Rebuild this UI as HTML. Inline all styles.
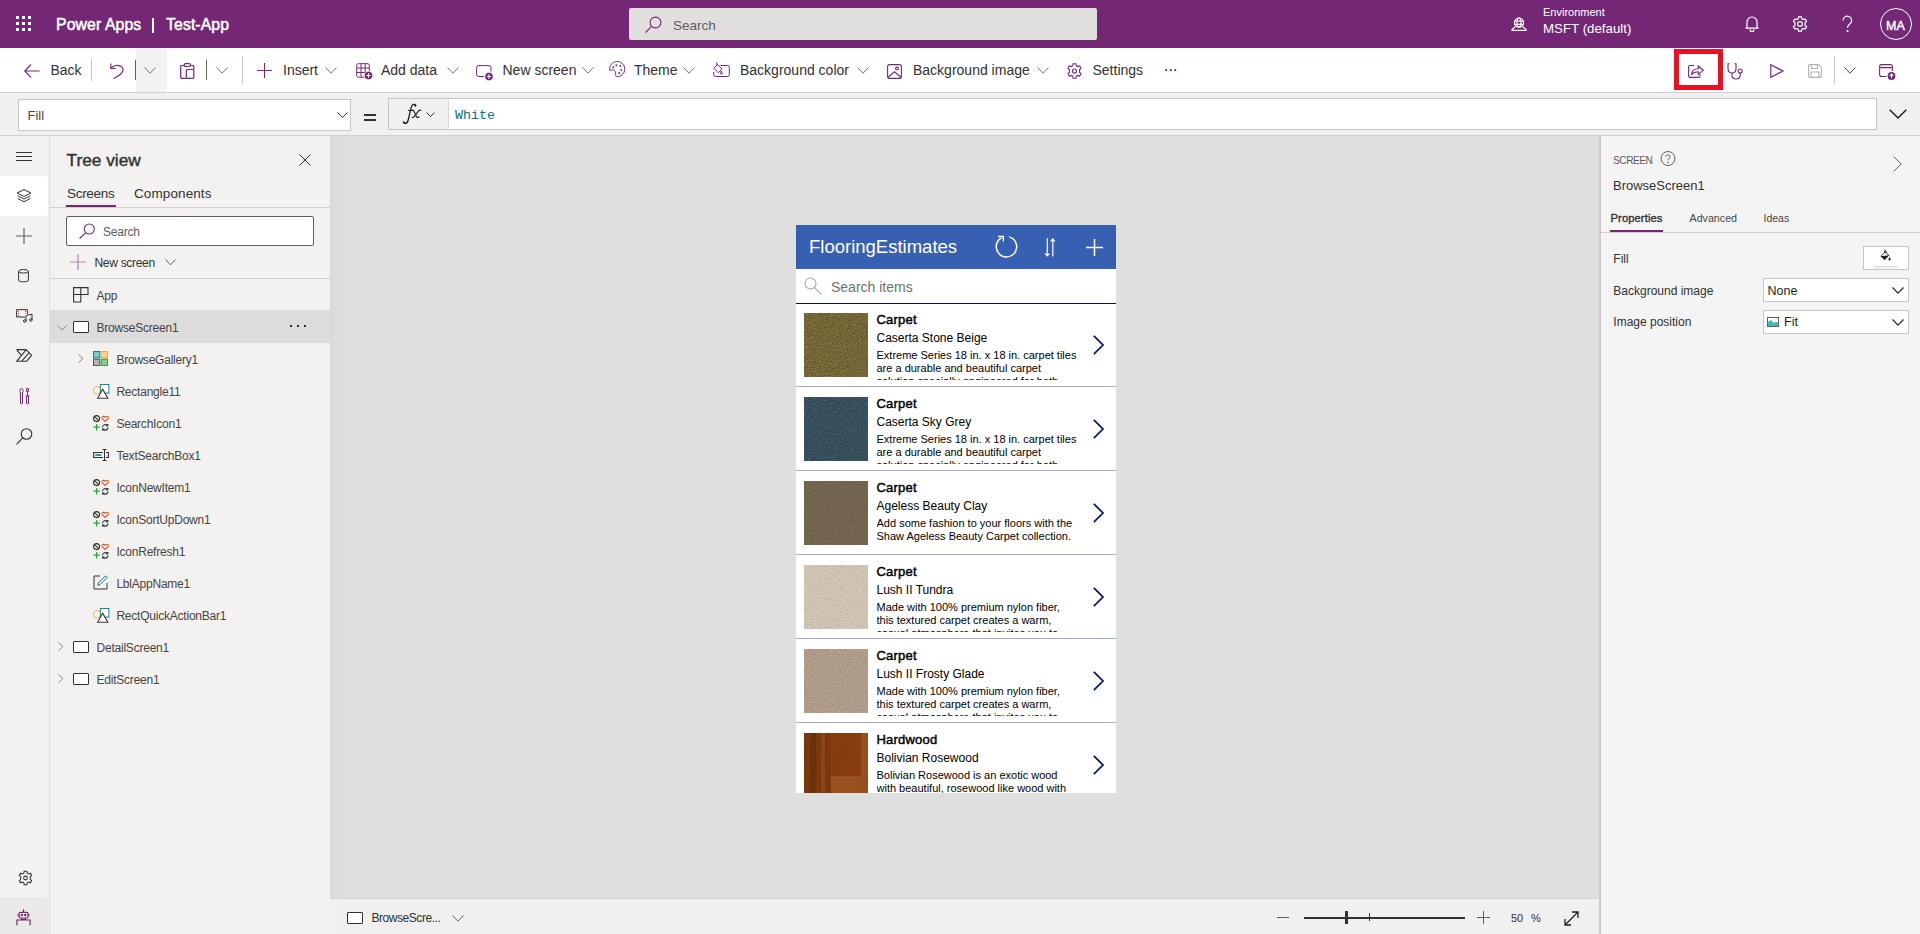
<!DOCTYPE html>
<html><head><meta charset="utf-8">
<style>
*{box-sizing:border-box;margin:0;padding:0}
html,body{width:1920px;height:934px;overflow:hidden;background:#fff;font-family:"Liberation Sans",sans-serif;color:#323130}
.a{position:absolute}
.t{position:absolute;white-space:nowrap;line-height:1}
svg{position:absolute;overflow:visible}
.t0{background:#6e6030;overflow:hidden}
.t1{background:#3b525b}
.t2{background:#6f6350}
.t3{background:#d4c9b8}
.t4{background:#b39f8b}
.t5{background:linear-gradient(90deg,#6b3210 0%,#8a4a1e 12%,#a45a26 25%,#7a3c14 40%,#9c5422 55%,#b0662e 70%,#8c4a1c 85%,#a85e2a 100%)}
</style></head><body>

<!-- ============ TOP BAR ============ -->
<div class="a" style="left:0;top:0;width:1920px;height:48px;background:#742774"></div>
<svg style="left:16px;top:16px" width="16" height="16" viewBox="0 0 16 16" fill="#fff">
<rect x="0" y="0" width="3" height="3"/><rect x="6" y="0" width="3" height="3"/><rect x="12" y="0" width="3" height="3"/>
<rect x="0" y="6" width="3" height="3"/><rect x="6" y="6" width="3" height="3"/><rect x="12" y="6" width="3" height="3"/>
<rect x="0" y="12" width="3" height="3"/><rect x="6" y="12" width="3" height="3"/><rect x="12" y="12" width="3" height="3"/>
</svg>
<div class="t" style="left:56px;top:16.8px;font-size:15.8px;color:#fff;letter-spacing:0.1px;-webkit-text-stroke:0.5px #fff">Power Apps</div>
<div class="a" style="left:152px;top:18px;width:2px;height:15px;background:#fff"></div>
<div class="t" style="left:166px;top:16.8px;font-size:15.8px;color:#fff;letter-spacing:0.1px;-webkit-text-stroke:0.5px #fff">Test-App</div>

<div class="a" style="left:629px;top:8px;width:468px;height:32px;background:#e1dfdd;border-radius:2px"></div>
<svg style="left:645px;top:16px" width="17" height="17" viewBox="0 0 17 17" fill="none" stroke="#742774" stroke-width="1.1">
<circle cx="10.5" cy="6.5" r="5.4"/><line x1="6.6" y1="10.4" x2="0.5" y2="16.5"/>
</svg>
<div class="t" style="left:673px;top:18.6px;font-size:13.5px;color:#605e5c">Search</div>

<!-- environment -->
<svg style="left:1511px;top:17px" width="16" height="14" viewBox="0 0 16 14" fill="none" stroke="#fff" stroke-width="1.2">
<circle cx="8" cy="5.6" r="4.6"/><ellipse cx="8" cy="5.6" rx="2" ry="4.6"/><line x1="3.4" y1="4" x2="12.6" y2="4"/><line x1="3.4" y1="7.3" x2="12.6" y2="7.3"/>
<path d="M4.5 9.5 L1 12.5 L1 13.4 L15 13.4 L15 12.5 L11.5 9.5"/>
</svg>
<div class="t" style="left:1543px;top:7.3px;font-size:11px;color:#fff">Environment</div>
<div class="t" style="left:1543px;top:21.5px;font-size:13.3px;color:#fff">MSFT (default)</div>

<!-- bell -->
<svg style="left:1745px;top:16px" width="14" height="16" viewBox="0 0 14 16" fill="none" stroke="#fff" stroke-width="1.2">
<path d="M2 12 L2 6 A5 5 0 0 1 12 6 L12 12 Z M0.5 12.2 L13.5 12.2"/><path d="M5 13.5 A2 2 0 0 0 9 13.5"/>
</svg>
<!-- gear -->
<svg style="left:1792px;top:16px" width="16" height="16" viewBox="0 0 16 16" fill="none" stroke="#fff" stroke-width="1.2">
<path d="M6.6 0.8 L9.4 0.8 L9.8 2.8 L11.3 3.6 L13.2 2.9 L14.6 5.3 L13.1 6.6 L13.1 9.4 L14.6 10.7 L13.2 13.1 L11.3 12.4 L9.8 13.2 L9.4 15.2 L6.6 15.2 L6.2 13.2 L4.7 12.4 L2.8 13.1 L1.4 10.7 L2.9 9.4 L2.9 6.6 L1.4 5.3 L2.8 2.9 L4.7 3.6 L6.2 2.8 Z"/>
<circle cx="8" cy="8" r="2.4"/>
</svg>
<!-- help -->
<svg style="left:1842px;top:16px" width="11" height="16" viewBox="0 0 11 16" fill="none" stroke="#fff" stroke-width="1.2">
<path d="M1 4.5 A4.3 4.3 0 1 1 7.5 8.2 C6 9.2 5.5 10 5.5 12"/><circle cx="5.5" cy="15" r="0.5" fill="#fff"/>
</svg>
<div class="a" style="left:1880px;top:8px;width:32px;height:32px;border:1px solid #fff;border-radius:50%"></div>
<div class="t" style="left:1886px;top:20.3px;font-size:12.5px;color:#fff;-webkit-text-stroke:0.4px #fff;letter-spacing:0.2px">MA</div>

<!-- ============ TOOLBAR ============ -->
<svg style="left:24px;top:64px" width="16" height="14" viewBox="0 0 16 14" fill="none" stroke="#742774" stroke-width="1.1">
<path d="M7 0.5 L0.8 7 L7 13.5 M0.8 7 L15.6 7"/>
</svg>
<div class="t" style="left:50.5px;top:63.1px;font-size:14px">Back</div>
<div class="a" style="left:91px;top:59px;width:1px;height:22px;background:#c8c6c4"></div>
<svg style="left:110px;top:63px" width="14" height="16" viewBox="0 0 14 16" fill="none" stroke="#742774" stroke-width="1.1">
<path d="M0.8 0.5 L0.8 5.5 L5.6 5.5 M0.8 5.5 C3 2.2 9 1.2 12 4.2 C14.5 7 12.5 11.5 3.5 15.5"/>
</svg>
<div class="a" style="left:135px;top:60px;width:1px;height:20px;background:#605e5c"></div>
<div class="a" style="left:136px;top:48px;width:31px;height:44px;background:#f3f2f1"></div>
<svg style="left:144px;top:67px" width="12" height="7" viewBox="0 0 12 7" fill="none" stroke="#797775" stroke-width="1">
<path d="M0.5 0.5 L6 6.2 L11.5 0.5"/>
</svg>
<svg style="left:180px;top:63px" width="15" height="16" viewBox="0 0 15 16" fill="none" stroke="#742774" stroke-width="1.2">
<path d="M4 2.5 L1.5 2.5 Q0.7 2.5 0.7 3.3 L0.7 14.5 Q0.7 15.3 1.5 15.3 L6 15.3"/>
<path d="M10.5 2.5 L13 2.5 Q13.8 2.5 13.8 3.3 L13.8 6.5"/>
<rect x="4.3" y="0.7" width="6" height="2.8" rx="1"/>
<rect x="6.3" y="6.5" width="7.5" height="8.8" rx="1"/>
</svg>
<div class="a" style="left:206px;top:60px;width:1px;height:20px;background:#605e5c"></div>
<svg style="left:215.5px;top:67px" width="12" height="7" viewBox="0 0 12 7" fill="none" stroke="#797775" stroke-width="1">
<path d="M0.5 0.5 L6 6.2 L11.5 0.5"/>
</svg>
<div class="a" style="left:242px;top:56px;width:1px;height:28px;background:#c8c6c4"></div>
<svg style="left:257px;top:63px" width="15" height="15" viewBox="0 0 15 15" fill="none" stroke="#742774" stroke-width="1.1">
<path d="M7.5 0 L7.5 15 M0 7.5 L15 7.5"/>
</svg>
<div class="t" style="left:283px;top:63.1px;font-size:14px">Insert</div>
<svg style="left:325px;top:67px" width="12" height="7" viewBox="0 0 12 7" fill="none" stroke="#797775" stroke-width="1"><path d="M0.5 0.5 L6 6.2 L11.5 0.5"/></svg>
<svg style="left:355.5px;top:63px" width="17" height="17" viewBox="0 0 17 17" fill="none" stroke="#742774" stroke-width="1">
<path d="M9 14.2 L2.5 14.2 Q0.7 14.2 0.7 12.4 L0.7 2.5 Q0.7 0.7 2.5 0.7 L11.5 0.7 Q13.3 0.7 13.3 2.5 L13.3 9 M0.7 5 L13.3 5 M0.7 9.5 L9 9.5 M5 0.7 L5 14.2 M9.2 0.7 L9.2 10"/>
<circle cx="12.5" cy="12.5" r="4.3" fill="#742774" stroke="#fff" stroke-width="0.8"/>
<path d="M12.5 10.3 L12.5 14.7 M10.3 12.5 L14.7 12.5" stroke="#fff" stroke-width="1.1"/>
</svg>
<div class="t" style="left:381px;top:63.1px;font-size:14px">Add data</div>
<svg style="left:447px;top:67px" width="12" height="7" viewBox="0 0 12 7" fill="none" stroke="#797775" stroke-width="1"><path d="M0.5 0.5 L6 6.2 L11.5 0.5"/></svg>

<svg style="left:475.5px;top:65px" width="18" height="16" viewBox="0 0 18 16" fill="none" stroke="#742774" stroke-width="1">
<path d="M8 11.5 L2.5 11.5 Q0.6 11.5 0.6 9.6 L0.6 2.5 Q0.6 0.6 2.5 0.6 L13 0.6 Q15 0.6 15 2.5 L15 6.5"/>
<circle cx="13" cy="11.5" r="4.3" fill="#742774" stroke="#fff" stroke-width="0.8"/>
<path d="M13 9.3 L13 13.7 M10.8 11.5 L15.2 11.5" stroke="#fff" stroke-width="1.1"/>
</svg>
<div class="t" style="left:502.5px;top:63.1px;font-size:14px">New screen</div>
<svg style="left:582px;top:67px" width="12" height="7" viewBox="0 0 12 7" fill="none" stroke="#797775" stroke-width="1"><path d="M0.5 0.5 L6 6.2 L11.5 0.5"/></svg>

<svg style="left:609px;top:61px" width="17" height="17" viewBox="0 0 17 17" fill="none" stroke="#742774" stroke-width="0.95">
<path d="M0.7 9.3 A7.6 7.6 0 1 1 7.4 15.6 C6.6 15.4 6.6 13.5 6.6 12.2 C6.6 10 5.3 8.7 3.7 8.7 C2.4 8.7 1.8 9.7 0.7 9.3 Z"/>
<circle cx="4.3" cy="6.2" r="0.95" fill="#742774" stroke="none"/><circle cx="7.3" cy="4.2" r="0.95" fill="#742774" stroke="none"/>
<circle cx="11.3" cy="5" r="0.95" fill="#742774" stroke="none"/><circle cx="12.2" cy="9" r="0.95" fill="#742774" stroke="none"/>
<circle cx="10.2" cy="12" r="0.95" fill="#742774" stroke="none"/>
</svg>
<div class="t" style="left:634px;top:63.1px;font-size:14px">Theme</div>
<svg style="left:683px;top:67px" width="12" height="7" viewBox="0 0 12 7" fill="none" stroke="#797775" stroke-width="1"><path d="M0.5 0.5 L6 6.2 L11.5 0.5"/></svg>

<svg style="left:712.5px;top:62px" width="17" height="15" viewBox="0 0 17 15" fill="none" stroke="#742774" stroke-width="1">
<path d="M7.5 3.5 L14.5 3.5 Q16.3 3.5 16.3 5.3 L16.3 12.7 Q16.3 14.5 14.5 14.5 L2.5 14.5 Q0.7 14.5 0.7 12.7 L0.7 10"/>
<path d="M3.8 0.3 L3.8 3.5 M0.8 6.3 L4.6 2.5 L9 6.9 L5.2 10.7 Z M8.3 9 Q10 11 9.2 11.9 Q8.3 12.5 7.6 11.8 Q7.2 10.8 8.3 9 Z"/>
</svg>
<div class="t" style="left:740px;top:63.1px;font-size:14px">Background color</div>
<svg style="left:857px;top:67px" width="12" height="7" viewBox="0 0 12 7" fill="none" stroke="#797775" stroke-width="1"><path d="M0.5 0.5 L6 6.2 L11.5 0.5"/></svg>

<svg style="left:887px;top:64px" width="15" height="15" viewBox="0 0 15 15" fill="none" stroke="#742774" stroke-width="1.1">
<rect x="0.6" y="0.6" width="13.8" height="13.8" rx="2"/>
<path d="M0.8 13.5 L7.5 7.8 L14.2 13.5"/><circle cx="10" cy="4.5" r="1.4"/>
</svg>
<div class="t" style="left:913px;top:63.1px;font-size:14px">Background image</div>
<svg style="left:1037px;top:67px" width="12" height="7" viewBox="0 0 12 7" fill="none" stroke="#797775" stroke-width="1"><path d="M0.5 0.5 L6 6.2 L11.5 0.5"/></svg>

<svg style="left:1065.5px;top:63px" width="17" height="16" viewBox="0 0 16 16" fill="none" stroke="#742774" stroke-width="1.1">
<path d="M6.6 0.8 L9.4 0.8 L9.8 2.8 L11.3 3.6 L13.2 2.9 L14.6 5.3 L13.1 6.6 L13.1 9.4 L14.6 10.7 L13.2 13.1 L11.3 12.4 L9.8 13.2 L9.4 15.2 L6.6 15.2 L6.2 13.2 L4.7 12.4 L2.8 13.1 L1.4 10.7 L2.9 9.4 L2.9 6.6 L1.4 5.3 L2.8 2.9 L4.7 3.6 L6.2 2.8 Z"/><circle cx="8" cy="8" r="2"/>
</svg>
<div class="t" style="left:1092.5px;top:63.1px;font-size:14px">Settings</div>
<svg style="left:1165px;top:69px" width="12" height="3" viewBox="0 0 12 3" fill="#742774">
<circle cx="1.2" cy="1.2" r="1.1"/><circle cx="5.7" cy="1.2" r="1.1"/><circle cx="10.2" cy="1.2" r="1.1"/>
</svg>

<!-- right toolbar -->
<div class="a" style="left:1674px;top:49px;width:49px;height:41px;border:5px solid #e81123"></div>
<svg style="left:1688px;top:64px" width="16" height="14" viewBox="0 0 16 14" fill="none" stroke="#742774" stroke-width="1.1">
<path d="M6 1.5 L2 1.5 Q0.6 1.5 0.6 3 L0.6 12 Q0.6 13.4 2 13.4 L10.5 13.4 Q12 13.4 12 12 L12 10.5"/>
<path d="M3.5 10.5 C4 6.5 7 4.8 10.3 4.8 L10.3 2 L15.3 6.3 L10.3 10.5 L10.3 7.8 C7.5 7.8 5.3 8.5 3.5 10.5 Z"/>
</svg>
<svg style="left:1727px;top:63px" width="17" height="17" viewBox="0 0 17 17" fill="none" stroke="#742774" stroke-width="1.1">
<path d="M2.5 0.8 L1 0.8 L1 5.5 C1 8.5 3 10 5 10 C7 10 9 8.5 9 5.5 L9 0.8 L7.5 0.8"/>
<path d="M5 10 L5 12 C5 14.5 6.5 16 9 16 C11.5 16 13.2 14.5 13.2 12 L13.2 10"/>
<circle cx="13.2" cy="8" r="2"/>
</svg>
<svg style="left:1770px;top:64px" width="14" height="14" viewBox="0 0 14 14" fill="none" stroke="#742774" stroke-width="1.2">
<path d="M0.8 0.8 L13 7 L0.8 13.2 Z"/>
</svg>
<svg style="left:1808px;top:64px" width="14" height="14" viewBox="0 0 14 14" fill="none" stroke="#b3b0ad" stroke-width="1.1">
<path d="M1.8 0.6 L10.5 0.6 L13.4 3.5 L13.4 12 Q13.4 13.4 12 13.4 L2 13.4 Q0.6 13.4 0.6 12 L0.6 2 Q0.6 0.6 1.8 0.6 Z M3.5 0.6 L3.5 4.5 L9.5 4.5 L9.5 0.6 M3 13.4 L3 8 L11 8 L11 13.4"/>
</svg>
<div class="a" style="left:1834px;top:56px;width:1px;height:28px;background:#c8c6c4"></div>
<svg style="left:1844px;top:67px" width="12" height="7" viewBox="0 0 12 7" fill="none" stroke="#742774" stroke-width="1"><path d="M0.5 0.5 L6 6.2 L11.5 0.5"/></svg>
<svg style="left:1879px;top:64px" width="17" height="16" viewBox="0 0 17 16" fill="none" stroke="#742774" stroke-width="1.1">
<path d="M7.5 12.5 L2.5 12.5 Q0.6 12.5 0.6 10.6 L0.6 2.5 Q0.6 0.6 2.5 0.6 L11.5 0.6 Q13.4 0.6 13.4 2.5 L13.4 7 M0.6 3.6 L13.4 3.6"/>
<circle cx="12.5" cy="12" r="3.9" fill="#742774" stroke="none"/>
<path d="M12.5 14.2 L12.5 10 M10.7 11.8 L12.5 10 L14.3 11.8" stroke="#fff" stroke-width="1.1"/>
</svg>
<div class="a" style="left:0;top:92px;width:1920px;height:1px;background:#d0d0d0"></div>

<!-- ============ FORMULA BAR ============ -->
<div class="a" style="left:0;top:93px;width:1920px;height:42px;background:#f0f0f0"></div>
<div class="a" style="left:18px;top:99px;width:333px;height:32px;background:#fff;border:1px solid #c8c6c4"></div>
<div class="t" style="left:27.5px;top:108.8px;font-size:13px;color:#484644">Fill</div>
<svg style="left:337px;top:112px" width="11" height="6" viewBox="0 0 11 6" fill="none" stroke="#323130" stroke-width="1"><path d="M0.5 0.5 L5.5 5.5 L10.5 0.5"/></svg>
<div class="a" style="left:364px;top:114px;width:12px;height:1.6px;background:#323130"></div>
<div class="a" style="left:364px;top:119px;width:12px;height:1.6px;background:#323130"></div>
<div class="a" style="left:388px;top:98px;width:61px;height:32px;background:#f0f0f0;border:1px solid #c8c6c4"></div>
<svg style="left:402px;top:103px" width="20" height="22" viewBox="0 0 20 22" fill="none" stroke="#201f1e">
<path d="M13.8 2.6 C13.6 1.4 12.2 1 11 1.6 C9.8 2.2 9.4 3.6 9 5.2 L6.2 17 C5.8 19 4.8 20.4 3 20.4 C2 20.4 1.4 19.8 1.6 19" stroke-width="1.3"/>
<circle cx="13.4" cy="2.8" r="1" fill="#201f1e" stroke="none"/><circle cx="1.9" cy="19.3" r="1" fill="#201f1e" stroke="none"/>
<path d="M6 7.3 L12 7.3" stroke-width="1"/>
<path d="M9.5 7.8 C10.8 6.8 11.8 7.2 12.6 9.5 L14.2 13.2 C14.8 14.6 16 14.8 17.4 14" stroke-width="1.15"/>
<path d="M19.2 7.6 C18.2 6.8 17 7.2 15.8 8.8 L12.4 13.4 C11.6 14.4 10.6 14.8 9.6 14.2" stroke-width="1.15"/>
</svg>
<svg style="left:425.5px;top:112px" width="9" height="5" viewBox="0 0 9 5" fill="none" stroke="#323130" stroke-width="1"><path d="M0.5 0.5 L4.5 4.5 L8.5 0.5"/></svg>
<div class="a" style="left:448px;top:98px;width:1429px;height:32px;background:#fff;border:1px solid #c8c6c4;border-left-color:#d8d8d8"></div>
<div class="t" style="left:455px;top:108.7px;font-family:'Liberation Mono',monospace;font-size:13.33px;color:#08727e">White</div>
<svg style="left:1889px;top:109px" width="18" height="10" viewBox="0 0 18 10" fill="none" stroke="#201f1e" stroke-width="1.5"><path d="M0.7 0.7 L9 9 L17.3 0.7"/></svg>
<div class="a" style="left:0;top:135px;width:1920px;height:1px;background:#d0d0d0"></div>

<!-- ============ LEFT RAIL ============ -->
<div class="a" style="left:0;top:136px;width:49px;height:798px;background:#f3f2f1"></div>
<div class="a" style="left:49px;top:136px;width:1px;height:798px;background:#e1dfdd"></div>
<svg style="left:16px;top:151px" width="16" height="11" viewBox="0 0 16 11" fill="none" stroke="#323130" stroke-width="1"><path d="M0 1.5 L16 1.5 M0 5.5 L16 5.5 M0 9.5 L16 9.5"/></svg>
<div class="a" style="left:0;top:176px;width:48px;height:40px;background:#fff;border-radius:0 4px 4px 0"></div>
<svg style="left:16px;top:189px" width="16" height="14" viewBox="0 0 16 14" fill="none" stroke="#323130" stroke-width="1">
<path d="M8 0.6 L15 4 L8 7.4 L1 4 Z M1.6 6.8 L8 10 L14.4 6.8 M1.6 9.4 L8 12.8 L14.4 9.4"/>
</svg>
<svg style="left:16px;top:228px" width="16" height="16" viewBox="0 0 16 16" fill="none" stroke="#605e5c" stroke-width="1.1"><path d="M8 0 L8 16 M0 8 L16 8"/></svg>
<svg style="left:18px;top:269px" width="11" height="14" viewBox="0 0 11 14" fill="none" stroke="#323130" stroke-width="1">
<ellipse cx="5.5" cy="2.3" rx="4.9" ry="1.8"/><path d="M0.6 2.3 L0.6 11.5 C0.6 13.2 10.4 13.2 10.4 11.5 L10.4 2.3"/>
</svg>
<svg style="left:16px;top:309px" width="17" height="14" viewBox="0 0 17 14" fill="none" stroke="#323130" stroke-width="1">
<path d="M9 8 L0.6 8 L0.6 0.6 L11.4 0.6 L11.4 5"/><path d="M2.6 1.8 L2.6 7.5 M9.4 1.8 L9.4 4.5" stroke="#742774" stroke-dasharray="1 1.2"/>
<path d="M10 12 L10 6.5 L16 5.2 L16 11" /><circle cx="8.8" cy="12" r="1.3"/><circle cx="14.8" cy="11" r="1.3"/>
</svg>
<svg style="left:16px;top:349px" width="16" height="13" viewBox="0 0 16 13" fill="none" stroke="#323130" stroke-width="1.1">
<path d="M0.6 0.6 L10.3 0.6 L15.6 6.4 L10.5 12.3 L0.6 12.3 L10.3 0.6 M0.6 0.6 L4.9 5.9 M13.1 3.7 L5.6 12.3" stroke-linejoin="round"/>
</svg>
<svg style="left:19px;top:388px" width="11" height="17" viewBox="0 0 11 17" fill="none" stroke="#742774" stroke-width="1">
<path d="M2.5 0.6 C0.5 0.6 0.5 3.5 1.5 5 L1.5 15.5 Q2.5 16.5 3.5 15.5 L3.5 5 C4.5 3.5 4.5 0.6 2.5 0.6 Z"/>
<path d="M7.5 0.6 L9.5 0.6 L9.5 3.5 L7.5 3.5 Z M8.5 3.5 L8.5 8 M6.5 8 L10.5 8 M7.5 8 L7.5 15.5 Q8.5 16.5 9.5 15.5 L9.5 8"/>
</svg>
<svg style="left:16px;top:428px" width="17" height="17" viewBox="0 0 17 17" fill="none" stroke="#323130" stroke-width="1.1">
<circle cx="10.5" cy="6" r="5.3"/><line x1="6.7" y1="9.8" x2="0.5" y2="16.3"/>
</svg>
<svg style="left:18px;top:870px" width="15" height="16" viewBox="0 0 16 16" fill="none" stroke="#323130" stroke-width="1.1">
<path d="M6.6 0.8 L9.4 0.8 L9.8 2.8 L11.3 3.6 L13.2 2.9 L14.6 5.3 L13.1 6.6 L13.1 9.4 L14.6 10.7 L13.2 13.1 L11.3 12.4 L9.8 13.2 L9.4 15.2 L6.6 15.2 L6.2 13.2 L4.7 12.4 L2.8 13.1 L1.4 10.7 L2.9 9.4 L2.9 6.6 L1.4 5.3 L2.8 2.9 L4.7 3.6 L6.2 2.8 Z"/><circle cx="8" cy="8" r="2"/>
</svg>
<div class="a" style="left:0;top:897px;width:48px;height:37px;background:#ebe9e8;border-radius:0 4px 0 0"></div>
<svg style="left:16px;top:909px" width="15" height="17" viewBox="0 0 15 17" fill="none" stroke="#742774" stroke-width="1.2">
<path d="M7.5 0.3 L7.5 3.3"/><rect x="3" y="3.3" width="9" height="5.7" rx="1.5"/><path d="M2.2 5.2 L2.2 7.2 M12.8 5.2 L12.8 7.2 M5.5 9 L5.5 10.5 L9.5 10.5 L9.5 9 M0.9 16.3 L0.9 11 L14.1 11 L14.1 16.3"/>
<circle cx="5.8" cy="6" r="0.6" fill="#742774"/><circle cx="9.2" cy="6" r="0.6" fill="#742774"/>
</svg>

<!-- ============ TREE PANEL ============ -->
<div class="a" style="left:50px;top:136px;width:280px;height:798px;background:#f3f2f1"></div>
<div class="t" style="left:66.5px;top:152.4px;font-size:17.3px;color:#323130;letter-spacing:0px;-webkit-text-stroke:0.4px #323130">Tree view</div>
<svg style="left:299px;top:154px" width="12" height="12" viewBox="0 0 12 12" fill="none" stroke="#323130" stroke-width="1"><path d="M0.5 0.5 L11.5 11.5 M11.5 0.5 L0.5 11.5"/></svg>
<div class="t" style="left:67px;top:187.4px;font-size:13.5px;color:#323130;letter-spacing:-0.3px">Screens</div>
<div class="t" style="left:134px;top:187.4px;font-size:13.5px;color:#323130;letter-spacing:0.1px">Components</div>
<div class="a" style="left:66px;top:205px;width:50px;height:2px;background:#742774"></div>
<div class="a" style="left:50px;top:207px;width:280px;height:1px;background:#d2d0ce"></div>
<div class="a" style="left:66px;top:216px;width:248px;height:30px;background:#fff;border:1px solid #605e5c;border-radius:2px"></div>
<svg style="left:79px;top:223px" width="17" height="16" viewBox="0 0 17 16" fill="none" stroke="#742774" stroke-width="1.1"><circle cx="10.3" cy="6" r="5"/><line x1="6.7" y1="9.6" x2="0.6" y2="15.5"/></svg>
<div class="t" style="left:103px;top:225.8px;font-size:12px;color:#605e5c;letter-spacing:-0.2px">Search</div>
<svg style="left:70px;top:254px" width="16" height="16" viewBox="0 0 16 16" fill="none" stroke="#b583b5" stroke-width="1.2"><path d="M8 0 L8 16 M0 8 L16 8"/></svg>
<div class="t" style="left:94.5px;top:257.4px;font-size:12px;color:#323130;letter-spacing:-0.3px">New screen</div>
<svg style="left:165px;top:259px" width="11" height="7" viewBox="0 0 11 7" fill="none" stroke="#605e5c" stroke-width="1"><path d="M0.5 0.5 L5.5 5.8 L10.5 0.5"/></svg>
<div class="a" style="left:50px;top:278px;width:280px;height:1px;background:#d2d0ce"></div>
<svg style="left:73px;top:287px" width="16" height="16" viewBox="0 0 16 16" fill="none" stroke="#323130" stroke-width="1.1"><path d="M0.6 0.6 L15 0.6 L15 7.5 L0.6 7.5 Z M0.6 7.5 L0.6 15 L7.8 15 L7.8 0.6"/></svg>
<div class="t" style="left:96.5px;top:290px;font-size:12px;letter-spacing:-0.22px;color:#464442">App</div>
<div class="a" style="left:50px;top:310px;width:280px;height:33px;background:#dddcdb"></div>
<svg style="left:57px;top:324.5px" width="10" height="6" viewBox="0 0 10 6" fill="none" stroke="#8a8886" stroke-width="1"><path d="M0.5 0.5 L5 5 L9.5 0.5"/></svg>
<div class="a" style="left:73px;top:321px;width:16px;height:12px;background:#fff;border:1.2px solid #323130;border-radius:1px"></div>
<div class="t" style="left:96.5px;top:322px;font-size:12px;letter-spacing:-0.22px;color:#464442">BrowseScreen1</div>
<svg style="left:290px;top:325px" width="16" height="2" viewBox="0 0 16 2" fill="#323130"><rect x="0" y="0" width="2" height="2"/><rect x="7" y="0" width="2" height="2"/><rect x="14" y="0" width="2" height="2"/></svg>
<svg style="left:78px;top:354px" width="6" height="9" viewBox="0 0 6 9" fill="none" stroke="#8a8886" stroke-width="1"><path d="M0.5 0.5 L5 4.5 L0.5 8.5"/></svg>
<svg style="left:93px;top:351px" width="15" height="15" viewBox="0 0 15 15" stroke-width="1">
<rect x="0.5" y="0.5" width="6.3" height="6.3" fill="#6fcfcf" stroke="#0e8a8a"/><rect x="8.2" y="0.5" width="6.3" height="6.3" fill="#fcd38a" stroke="#f4a93b"/>
<rect x="0.5" y="8.2" width="6.3" height="6.3" fill="#b4b4b4" stroke="#555"/><rect x="8.2" y="8.2" width="6.3" height="6.3" fill="#8fcb8f" stroke="#2f9e44"/></svg>
<div class="t" style="left:116.4px;top:354px;font-size:12px;letter-spacing:-0.22px;color:#464442">BrowseGallery1</div>
<svg style="left:93px;top:384px" width="17" height="15" viewBox="0 0 17 15" stroke-width="1">
<circle cx="4.2" cy="6.3" r="3.7" fill="#fff" stroke="#f2a93b"/><rect x="7.3" y="0.5" width="8.6" height="8.6" fill="#fff" stroke="#0e8a8a"/><path d="M4.6 14.3 L9.7 5.2 L14.8 14.3 Z" stroke="#3b3a39" fill="#fff" stroke-width="1.1"/>
</svg>
<div class="t" style="left:116.4px;top:386px;font-size:12px;letter-spacing:-0.22px;color:#464442">Rectangle11</div>
<svg style="left:93px;top:415px" width="16" height="16" viewBox="0 0 16 16" fill="none">
<circle cx="3.6" cy="3.6" r="3" stroke="#323130" stroke-width="1.1"/><path d="M1.5 1.5 L5.7 5.7" stroke="#323130" stroke-width="1.1"/>
<path d="M12.2 6.5 L9.5 3.8 C8.6 2.9 9 1.2 10.4 1.2 C11.3 1.2 11.9 1.8 12.2 2.3 C12.5 1.8 13.1 1.2 14 1.2 C15.4 1.2 15.8 2.9 14.9 3.8 Z" stroke="#e8562a" stroke-width="1.1"/>
<path d="M3.6 9 L3.6 15.4 M0.4 12.2 L6.8 12.2" stroke="#2ea043" stroke-width="1.2"/>
<path d="M9.5 12.5 C9.5 10.3 11.5 9.3 13.5 9.8 L14.8 10.6 M14.8 9 L14.8 10.8 L13 10.8 M15 12.3 C15 14.5 13 15.5 11 15 L9.7 14.2 M9.7 15.8 L9.7 14 L11.5 14" stroke="#323130" stroke-width="1.1"/>
</svg>
<div class="t" style="left:116.4px;top:418px;font-size:12px;letter-spacing:-0.22px;color:#464442">SearchIcon1</div>
<svg style="left:93px;top:449px" width="16" height="12" viewBox="0 0 16 12" fill="none">
<path d="M10 3.5 L0.6 3.5 L0.6 8.5 L10 8.5 M13 3.5 L15.4 3.5 L15.4 8.5 L13 8.5" stroke="#323130" stroke-width="1.1"/>
<rect x="2.3" y="5.2" width="6" height="1.6" fill="#0e7c86"/>
<path d="M9.5 0.5 L13.5 0.5 M11.5 0.5 L11.5 11.5 M9.5 11.5 L13.5 11.5" stroke="#323130" stroke-width="1"/>
</svg>
<div class="t" style="left:116.4px;top:450px;font-size:12px;letter-spacing:-0.22px;color:#464442">TextSearchBox1</div>
<svg style="left:93px;top:479px" width="16" height="16" viewBox="0 0 16 16" fill="none">
<circle cx="3.6" cy="3.6" r="3" stroke="#323130" stroke-width="1.1"/><path d="M1.5 1.5 L5.7 5.7" stroke="#323130" stroke-width="1.1"/>
<path d="M12.2 6.5 L9.5 3.8 C8.6 2.9 9 1.2 10.4 1.2 C11.3 1.2 11.9 1.8 12.2 2.3 C12.5 1.8 13.1 1.2 14 1.2 C15.4 1.2 15.8 2.9 14.9 3.8 Z" stroke="#e8562a" stroke-width="1.1"/>
<path d="M3.6 9 L3.6 15.4 M0.4 12.2 L6.8 12.2" stroke="#2ea043" stroke-width="1.2"/>
<path d="M9.5 12.5 C9.5 10.3 11.5 9.3 13.5 9.8 L14.8 10.6 M14.8 9 L14.8 10.8 L13 10.8 M15 12.3 C15 14.5 13 15.5 11 15 L9.7 14.2 M9.7 15.8 L9.7 14 L11.5 14" stroke="#323130" stroke-width="1.1"/>
</svg>
<div class="t" style="left:116.4px;top:482px;font-size:12px;letter-spacing:-0.22px;color:#464442">IconNewItem1</div>
<svg style="left:93px;top:511px" width="16" height="16" viewBox="0 0 16 16" fill="none">
<circle cx="3.6" cy="3.6" r="3" stroke="#323130" stroke-width="1.1"/><path d="M1.5 1.5 L5.7 5.7" stroke="#323130" stroke-width="1.1"/>
<path d="M12.2 6.5 L9.5 3.8 C8.6 2.9 9 1.2 10.4 1.2 C11.3 1.2 11.9 1.8 12.2 2.3 C12.5 1.8 13.1 1.2 14 1.2 C15.4 1.2 15.8 2.9 14.9 3.8 Z" stroke="#e8562a" stroke-width="1.1"/>
<path d="M3.6 9 L3.6 15.4 M0.4 12.2 L6.8 12.2" stroke="#2ea043" stroke-width="1.2"/>
<path d="M9.5 12.5 C9.5 10.3 11.5 9.3 13.5 9.8 L14.8 10.6 M14.8 9 L14.8 10.8 L13 10.8 M15 12.3 C15 14.5 13 15.5 11 15 L9.7 14.2 M9.7 15.8 L9.7 14 L11.5 14" stroke="#323130" stroke-width="1.1"/>
</svg>
<div class="t" style="left:116.4px;top:514px;font-size:12px;letter-spacing:-0.22px;color:#464442">IconSortUpDown1</div>
<svg style="left:93px;top:543px" width="16" height="16" viewBox="0 0 16 16" fill="none">
<circle cx="3.6" cy="3.6" r="3" stroke="#323130" stroke-width="1.1"/><path d="M1.5 1.5 L5.7 5.7" stroke="#323130" stroke-width="1.1"/>
<path d="M12.2 6.5 L9.5 3.8 C8.6 2.9 9 1.2 10.4 1.2 C11.3 1.2 11.9 1.8 12.2 2.3 C12.5 1.8 13.1 1.2 14 1.2 C15.4 1.2 15.8 2.9 14.9 3.8 Z" stroke="#e8562a" stroke-width="1.1"/>
<path d="M3.6 9 L3.6 15.4 M0.4 12.2 L6.8 12.2" stroke="#2ea043" stroke-width="1.2"/>
<path d="M9.5 12.5 C9.5 10.3 11.5 9.3 13.5 9.8 L14.8 10.6 M14.8 9 L14.8 10.8 L13 10.8 M15 12.3 C15 14.5 13 15.5 11 15 L9.7 14.2 M9.7 15.8 L9.7 14 L11.5 14" stroke="#323130" stroke-width="1.1"/>
</svg>
<div class="t" style="left:116.4px;top:546px;font-size:12px;letter-spacing:-0.22px;color:#464442">IconRefresh1</div>
<svg style="left:93px;top:575px" width="15" height="15" viewBox="0 0 15 15" fill="none" stroke="#323130" stroke-width="1">
<path d="M7 1 L1 1 L1 14 L14 14 L14 8"/><path d="M12.5 0.8 L14.2 2.5 L7 9.7 L4.8 10.2 L5.3 8 Z" stroke="#0e7c86"/>
</svg>
<div class="t" style="left:116.4px;top:578px;font-size:12px;letter-spacing:-0.22px;color:#464442">LblAppName1</div>
<svg style="left:93px;top:608px" width="17" height="15" viewBox="0 0 17 15" stroke-width="1">
<circle cx="4.2" cy="6.3" r="3.7" fill="#fff" stroke="#f2a93b"/><rect x="7.3" y="0.5" width="8.6" height="8.6" fill="#fff" stroke="#0e8a8a"/><path d="M4.6 14.3 L9.7 5.2 L14.8 14.3 Z" stroke="#3b3a39" fill="#fff" stroke-width="1.1"/>
</svg>
<div class="t" style="left:116.4px;top:610px;font-size:12px;letter-spacing:-0.22px;color:#464442">RectQuickActionBar1</div>
<svg style="left:58px;top:642px" width="6" height="9" viewBox="0 0 6 9" fill="none" stroke="#8a8886" stroke-width="1"><path d="M0.5 0.5 L5 4.5 L0.5 8.5"/></svg>
<div class="a" style="left:73px;top:641px;width:16px;height:12px;background:#fff;border:1.2px solid #323130;border-radius:1px"></div>
<div class="t" style="left:96.5px;top:642px;font-size:12px;letter-spacing:-0.22px;color:#464442">DetailScreen1</div>
<svg style="left:58px;top:674px" width="6" height="9" viewBox="0 0 6 9" fill="none" stroke="#8a8886" stroke-width="1"><path d="M0.5 0.5 L5 4.5 L0.5 8.5"/></svg>
<div class="a" style="left:73px;top:673px;width:16px;height:12px;background:#fff;border:1.2px solid #323130;border-radius:1px"></div>
<div class="t" style="left:96.5px;top:674px;font-size:12px;letter-spacing:-0.22px;color:#464442">EditScreen1</div>

<!-- ============ CANVAS ============ -->
<div class="a" style="left:330px;top:136px;width:1270px;height:762px;background:#dfdfdf"></div>
<div class="a" style="left:330px;top:136px;width:3px;height:762px;background:#d9d9d9"></div>
<div class="a" style="left:333px;top:136px;width:9px;height:762px;background:#dcdcdc"></div>
<div class="a" style="left:330px;top:898px;width:1270px;height:1px;background:#d2d2d2"></div>
<div class="a" style="left:330px;top:899px;width:1270px;height:35px;background:#f0f0f0"></div>

<!-- ============ APP ============ -->
<svg width="0" height="0" style="position:absolute">
<defs>
<filter id="n1" x="0" y="0" width="100%" height="100%"><feTurbulence type="fractalNoise" baseFrequency="0.9" numOctaves="2" seed="3"/><feColorMatrix type="matrix" values="0 0 0 0 0  0 0 0 0 0  0 0 0 0 0  0 0 0 1.1 -0.45"/></filter>
<filter id="n2" x="0" y="0" width="100%" height="100%"><feTurbulence type="fractalNoise" baseFrequency="0.6" numOctaves="2" seed="7"/><feColorMatrix type="matrix" values="0 0 0 0 1  0 0 0 0 1  0 0 0 0 1  0 0 0 1.2 -0.6"/></filter>
<filter id="wood" x="0" y="0" width="100%" height="100%"><feTurbulence type="fractalNoise" baseFrequency="0.5 0.02" numOctaves="2" seed="5"/><feColorMatrix type="matrix" values="0 0 0 0 0.3  0 0 0 0 0.07  0 0 0 0 0  0 0 0 1.4 -0.55"/></filter>
</defs>
</svg>
<div class="a" style="left:796px;top:225px;width:320px;height:568px;background:#fff;overflow:hidden">
<div class="a" style="left:0;top:0;width:320px;height:44px;background:#3860b2"></div>
<div class="t" style="left:13px;top:13.2px;font-size:18.5px;color:#fff">FlooringEstimates</div>
<svg style="left:198px;top:10px" width="24" height="24" viewBox="0 0 24 24" fill="none" stroke="#fff" stroke-width="1.5">
<path d="M15.1 1.9 A10.2 10.2 0 1 1 7.4 2.9"/><path d="M4 1.5 L9.3 1.5 L9.3 6.6" stroke-width="1.4"/>
</svg>
<svg style="left:249px;top:12.5px" width="11" height="19" viewBox="0 0 11 19" fill="none" stroke="#fff" stroke-width="1.2">
<path d="M2.3 0.3 L2.3 17.8 M0.2 15.5 L2.3 17.8 L4.4 15.5"/><path d="M7.8 1 L7.8 18.5 M5.7 3.3 L7.8 1 L9.9 3.3"/>
</svg>
<svg style="left:290px;top:13.5px" width="17" height="17" viewBox="0 0 17 17" fill="none" stroke="#fff" stroke-width="1.5"><path d="M8.5 0 L8.5 17 M0 8.5 L17 8.5"/></svg>
<svg style="left:8px;top:52px" width="18" height="18" viewBox="0 0 18 18" fill="none" stroke="#a6a6a6" stroke-width="1.1"><circle cx="6.5" cy="6.5" r="5.5"/><line x1="10.5" y1="10.5" x2="17.3" y2="17.3"/></svg>
<div class="t" style="left:35px;top:55px;font-size:14px;color:#707070">Search items</div>
<div class="a" style="left:0;top:77.5px;width:320px;height:1.5px;background:#00126b"></div>
<svg style="left:8px;top:88px" width="64" height="64" viewBox="0 0 64 64"><rect width="64" height="64" fill="#7a6c36"/><rect width="64" height="64" filter="url(#n1)" opacity="0.7"/><rect width="64" height="64" filter="url(#n2)" opacity="0.4"/></svg>
<div class="t" style="left:80.5px;top:87.9px;font-size:13px;color:#000;-webkit-text-stroke:0.45px #000;letter-spacing:0.2px">Carpet</div>
<div class="t" style="left:80.5px;top:106.6px;font-size:12px;color:#000">Caserta Stone Beige</div>
<div class="a" style="left:80.5px;top:124.3px;width:215px;height:31.2px;overflow:hidden;font-size:11px;line-height:13px;color:#000;white-space:nowrap">Extreme Series 18 in. x 18 in. carpet tiles<br>are a durable and beautiful carpet<br>solution specially engineered for both</div>
<svg style="left:297px;top:110px" width="11" height="20" viewBox="0 0 11 20" fill="none" stroke="#00126b" stroke-width="1.7"><path d="M0.8 0.8 L10 10 L0.8 19.2"/></svg>
<div class="a" style="left:0;top:161px;width:320px;height:1px;background:#a6aed8"></div>
<svg style="left:8px;top:172px" width="64" height="64" viewBox="0 0 64 64"><rect width="64" height="64" fill="#395260"/><rect width="64" height="64" filter="url(#n1)" opacity="0.6"/><rect width="64" height="64" filter="url(#n2)" opacity="0.3"/></svg>
<div class="t" style="left:80.5px;top:171.9px;font-size:13px;color:#000;-webkit-text-stroke:0.45px #000;letter-spacing:0.2px">Carpet</div>
<div class="t" style="left:80.5px;top:190.6px;font-size:12px;color:#000">Caserta Sky Grey</div>
<div class="a" style="left:80.5px;top:208.3px;width:215px;height:31.2px;overflow:hidden;font-size:11px;line-height:13px;color:#000;white-space:nowrap">Extreme Series 18 in. x 18 in. carpet tiles<br>are a durable and beautiful carpet<br>solution specially engineered for both</div>
<svg style="left:297px;top:194px" width="11" height="20" viewBox="0 0 11 20" fill="none" stroke="#00126b" stroke-width="1.7"><path d="M0.8 0.8 L10 10 L0.8 19.2"/></svg>
<div class="a" style="left:0;top:245px;width:320px;height:1px;background:#a6aed8"></div>
<svg style="left:8px;top:256px" width="64" height="64" viewBox="0 0 64 64"><rect width="64" height="64" fill="#74654f"/><rect width="64" height="64" filter="url(#n1)" opacity="0.25"/><rect width="64" height="64" filter="url(#n2)" opacity="0.2"/></svg>
<div class="t" style="left:80.5px;top:255.9px;font-size:13px;color:#000;-webkit-text-stroke:0.45px #000;letter-spacing:0.2px">Carpet</div>
<div class="t" style="left:80.5px;top:274.6px;font-size:12px;color:#000">Ageless Beauty Clay</div>
<div class="a" style="left:80.5px;top:292.3px;width:215px;height:32px;overflow:hidden;font-size:11px;line-height:13px;color:#000;white-space:nowrap">Add some fashion to your floors with the<br>Shaw Ageless Beauty Carpet collection.</div>
<svg style="left:297px;top:278px" width="11" height="20" viewBox="0 0 11 20" fill="none" stroke="#00126b" stroke-width="1.7"><path d="M0.8 0.8 L10 10 L0.8 19.2"/></svg>
<div class="a" style="left:0;top:329px;width:320px;height:1px;background:#a6aed8"></div>
<svg style="left:8px;top:340px" width="64" height="64" viewBox="0 0 64 64"><rect width="64" height="64" fill="#d4c9b8"/><rect width="64" height="64" filter="url(#n1)" opacity="0.3"/><rect width="64" height="64" filter="url(#n2)" opacity="0.3"/></svg>
<div class="t" style="left:80.5px;top:339.9px;font-size:13px;color:#000;-webkit-text-stroke:0.45px #000;letter-spacing:0.2px">Carpet</div>
<div class="t" style="left:80.5px;top:358.6px;font-size:12px;color:#000">Lush II Tundra</div>
<div class="a" style="left:80.5px;top:376.3px;width:215px;height:31.2px;overflow:hidden;font-size:11px;line-height:13px;color:#000;white-space:nowrap">Made with 100% premium nylon fiber,<br>this textured carpet creates a warm,<br>casual atmosphere that invites you to</div>
<svg style="left:297px;top:362px" width="11" height="20" viewBox="0 0 11 20" fill="none" stroke="#00126b" stroke-width="1.7"><path d="M0.8 0.8 L10 10 L0.8 19.2"/></svg>
<div class="a" style="left:0;top:413px;width:320px;height:1px;background:#a6aed8"></div>
<svg style="left:8px;top:424px" width="64" height="64" viewBox="0 0 64 64"><rect width="64" height="64" fill="#b39f8b"/><rect width="64" height="64" filter="url(#n1)" opacity="0.3"/><rect width="64" height="64" filter="url(#n2)" opacity="0.3"/></svg>
<div class="t" style="left:80.5px;top:423.9px;font-size:13px;color:#000;-webkit-text-stroke:0.45px #000;letter-spacing:0.2px">Carpet</div>
<div class="t" style="left:80.5px;top:442.6px;font-size:12px;color:#000">Lush II Frosty Glade</div>
<div class="a" style="left:80.5px;top:460.3px;width:215px;height:31.2px;overflow:hidden;font-size:11px;line-height:13px;color:#000;white-space:nowrap">Made with 100% premium nylon fiber,<br>this textured carpet creates a warm,<br>casual atmosphere that invites you to</div>
<svg style="left:297px;top:446px" width="11" height="20" viewBox="0 0 11 20" fill="none" stroke="#00126b" stroke-width="1.7"><path d="M0.8 0.8 L10 10 L0.8 19.2"/></svg>
<div class="a" style="left:0;top:497px;width:320px;height:1px;background:#a6aed8"></div>
<svg style="left:8px;top:508px" width="64" height="64" viewBox="0 0 64 64"><rect width="64" height="64" fill="#823a12"/><rect x="0" width="27" height="64" fill="#77360f"/><rect x="6" width="6" height="64" fill="#5a260a" opacity="0.45"/><rect x="17" width="4" height="64" fill="#a05a28" opacity="0.45"/><rect x="27" width="30" height="44" fill="#863c10"/><rect x="27" y="44" width="30" height="20" fill="#9a5224"/><rect x="57" width="7" height="64" fill="#97501f"/><line x1="27" y1="44" x2="57" y2="44" stroke="#b07a50" stroke-width="0.5"/><rect width="64" height="64" filter="url(#wood)" opacity="0.55"/></svg>
<div class="t" style="left:80.5px;top:507.9px;font-size:13px;color:#000;-webkit-text-stroke:0.45px #000;letter-spacing:0.2px">Hardwood</div>
<div class="t" style="left:80.5px;top:526.6px;font-size:12px;color:#000">Bolivian Rosewood</div>
<div class="a" style="left:80.5px;top:544.3px;width:215px;height:31.2px;overflow:hidden;font-size:11px;line-height:13px;color:#000;white-space:nowrap">Bolivian Rosewood is an exotic wood<br>with beautiful, rosewood like wood with<br>a rich, reddish-brown color</div>
<svg style="left:297px;top:530px" width="11" height="20" viewBox="0 0 11 20" fill="none" stroke="#00126b" stroke-width="1.7"><path d="M0.8 0.8 L10 10 L0.8 19.2"/></svg>
<div class="a" style="left:0;top:581px;width:320px;height:1px;background:#a6aed8"></div>
</div>
<!-- ============ RIGHT PANEL ============ -->
<div class="a" style="left:1599px;top:136px;width:2px;height:798px;background:linear-gradient(90deg,#d0d0d0,#c6c6c6)"></div>
<div class="a" style="left:1601px;top:136px;width:319px;height:798px;background:#f4f4f4"></div>
<div class="t" style="left:1613px;top:155.6px;font-size:10.2px;color:#605e5c;letter-spacing:-0.5px">SCREEN</div>
<svg style="left:1659.5px;top:151px" width="16" height="16" viewBox="0 0 16 16" fill="none" stroke="#605e5c" stroke-width="1">
<circle cx="8" cy="7.5" r="7"/><path d="M5.8 5.8 C5.8 3.2 10.2 3.2 10.2 5.8 C10.2 7.3 8 7.5 8 9.3"/><circle cx="8" cy="11.5" r="0.4" fill="#605e5c"/>
</svg>
<svg style="left:1893px;top:156px" width="9" height="16" viewBox="0 0 9 16" fill="none" stroke="#605e5c" stroke-width="1"><path d="M0.5 0.5 L8.3 8 L0.5 15.5"/></svg>
<div class="t" style="left:1613px;top:179px;font-size:13px;color:#323130">BrowseScreen1</div>
<div class="t" style="left:1610.5px;top:213px;font-size:11.2px;color:#323130;letter-spacing:0.1px;-webkit-text-stroke:0.35px #323130">Properties</div>
<div class="t" style="left:1689.5px;top:213px;font-size:10.7px;color:#484644">Advanced</div>
<div class="t" style="left:1763.5px;top:213px;font-size:10.5px;color:#484644">Ideas</div>
<div class="a" style="left:1610px;top:230px;width:53px;height:2px;background:#742774"></div>
<div class="a" style="left:1601px;top:232px;width:319px;height:1px;background:#d2d0ce"></div>
<div class="t" style="left:1613.3px;top:253.2px;font-size:12px;color:#323130">Fill</div>
<div class="a" style="left:1863px;top:246px;width:46px;height:24px;background:#fff;border:1px solid #c8c6c4"></div>
<div class="a" style="left:1874px;top:263px;width:24px;height:2.5px;background:#fff;box-shadow:0 1.5px 2px rgba(0,0,0,0.16)"></div>
<svg style="left:1880px;top:249px" width="12" height="13" viewBox="0 0 12 13">
<path d="M1 7.2 L5.3 2.8 L8.9 6.3 L4.6 10.7 Z" fill="none" stroke="#201f1e" stroke-width="0.9"/>
<path d="M0.8 7.2 L9 6.3 L4.6 10.7 Z" fill="#201f1e"/>
<path d="M4.6 3.5 L4.6 1.8 Q5.3 0.7 6 1.8 L6 4.3" fill="none" stroke="#201f1e" stroke-width="0.9"/>
<path d="M9.6 8 Q11 10 10.6 11.1 Q9.6 12.1 8.6 11.1 Q8.2 10 9.6 8 Z" fill="#201f1e"/>
</svg>
<div class="t" style="left:1613.3px;top:284.8px;font-size:12px;color:#323130">Background image</div>
<div class="a" style="left:1763px;top:278px;width:146px;height:24px;background:#fff;border:1px solid #c8c6c4"></div>
<div class="t" style="left:1767.5px;top:284.8px;font-size:12.5px;color:#201f1e">None</div>
<svg style="left:1892px;top:286.5px" width="12" height="7" viewBox="0 0 12 7" fill="none" stroke="#201f1e" stroke-width="1.1"><path d="M0.5 0.5 L6 6.2 L11.5 0.5"/></svg>
<div class="t" style="left:1613.3px;top:316.3px;font-size:12px;color:#323130">Image position</div>
<div class="a" style="left:1763px;top:310px;width:146px;height:24px;background:#fff;border:1px solid #c8c6c4"></div>
<svg style="left:1767px;top:317px" width="12" height="10" viewBox="0 0 12 10"><rect x="0.5" y="0.5" width="11" height="9" fill="#fff" stroke="#605e5c"/><path d="M1 9 L1 5 L4 3 L7 6 L9 4.5 L11 6 L11 9 Z" fill="#43b7b9"/><circle cx="9" cy="2.5" r="0.8" fill="#f8c45a"/></svg>
<div class="t" style="left:1784px;top:316.3px;font-size:12.5px;color:#201f1e">Fit</div>
<svg style="left:1892px;top:318.5px" width="12" height="7" viewBox="0 0 12 7" fill="none" stroke="#201f1e" stroke-width="1.1"><path d="M0.5 0.5 L6 6.2 L11.5 0.5"/></svg>

<!-- bottom bar -->
<div class="a" style="left:347px;top:912px;width:16px;height:12px;background:#fff;border:1.2px solid #323130;border-radius:1px"></div>
<div class="t" style="left:371.5px;top:912.3px;font-size:12px;color:#323130;letter-spacing:-0.45px">BrowseScre...</div>
<svg style="left:452px;top:915px" width="12" height="7" viewBox="0 0 12 7" fill="none" stroke="#605e5c" stroke-width="1"><path d="M0.5 0.5 L6 6.2 L11.5 0.5"/></svg>
<div class="a" style="left:1277px;top:917px;width:12px;height:1px;background:#605e5c"></div>
<div class="a" style="left:1304px;top:916.5px;width:161px;height:2px;background:#323130"></div>
<div class="a" style="left:1345px;top:911px;width:3px;height:13px;background:#323130"></div>
<div class="a" style="left:1368.5px;top:913px;width:1.5px;height:8px;background:#323130"></div>
<svg style="left:1477px;top:911px" width="13" height="13" viewBox="0 0 13 13" fill="none" stroke="#605e5c" stroke-width="1"><path d="M6.5 0 L6.5 13 M0 6.5 L13 6.5"/></svg>
<div class="t" style="left:1511px;top:912.5px;font-size:11px;color:#323130">50</div>
<div class="t" style="left:1531px;top:912.5px;font-size:11px;color:#323130">%</div>
<svg style="left:1564px;top:911px" width="15" height="15" viewBox="0 0 15 15" fill="none" stroke="#201f1e" stroke-width="1.3"><path d="M1 14 L14 1 M8 1 L14 1 L14 7 M1 8 L1 14 L7 14"/></svg>

</body></html>
